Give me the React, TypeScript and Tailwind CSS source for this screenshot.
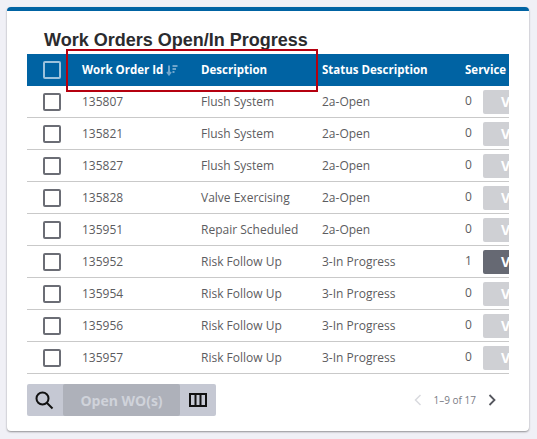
import React from 'react';

const rows = [
  { id: '135807', desc: 'Flush System', status: '2a-Open', count: 0 },
  { id: '135821', desc: 'Flush System', status: '2a-Open', count: 0 },
  { id: '135827', desc: 'Flush System', status: '2a-Open', count: 0 },
  { id: '135828', desc: 'Valve Exercising', status: '2a-Open', count: 0 },
  { id: '135951', desc: 'Repair Scheduled', status: '2a-Open', count: 0 },
  { id: '135952', desc: 'Risk Follow Up', status: '3-In Progress', count: 1 },
  { id: '135954', desc: 'Risk Follow Up', status: '3-In Progress', count: 0 },
  { id: '135956', desc: 'Risk Follow Up', status: '3-In Progress', count: 0 },
  { id: '135957', desc: 'Risk Follow Up', status: '3-In Progress', count: 0 },
];

const App: React.FC = () => {
  return (
    <div className="h-[439px] w-[537px] overflow-hidden bg-[#f0f0f6] p-[7px] font-['Open_Sans',sans-serif]">
      <div className="relative h-[424px] w-[522px] rounded-[4px] border-t-4 border-[#0063a3] bg-white px-5 shadow-[0_1px_2px_rgba(0,0,0,0.4)]">
        <h1 className="h-[43px] pl-[17px] pt-[17px] font-['Liberation_Sans',sans-serif] text-[18px] leading-[24px] font-bold text-[#2b2b2e]">
          Work Orders Open/In Progress
        </h1>

        <div className="w-[482px] overflow-hidden">
          <div className="flex h-[32px] items-center bg-[#0063a3] text-[11.5px] font-bold whitespace-nowrap text-white">
            <div className="flex w-[39px] shrink-0 justify-center pl-[11px]">
              <span className="h-[18px] w-[18px] rounded-[2px] border-2 border-[#9cc2dc]" />
            </div>
            <div className="flex w-[135px] shrink-0 items-center pl-4">
              Work Order Id
              <svg className="ml-[3px] mt-[1px]" width="12" height="11" viewBox="0 0 12 11" fill="none" stroke="#6fa5cb" strokeWidth="2">
                <path d="M3 0.5V9M1 7L3 9.5L5 7" />
                <path d="M6.5 1H11.5M6.5 4H10M6.5 7H8.5" />
              </svg>
            </div>
            <div className="w-[121px] shrink-0">Description</div>
            <div className="w-[143px] shrink-0">Status Description</div>
            <div className="w-[44px] shrink-0 overflow-hidden">Service</div>
          </div>

          {rows.map((row) => (
            <div key={row.id} className="flex h-[32px] items-center border-b border-[#c9c9c9] text-[12px] whitespace-nowrap text-[#5c5c60]">
              <div className="flex w-[39px] shrink-0 justify-center pl-[11px]">
                <span className="h-[18px] w-[18px] rounded-[2px] border-2 border-[#6b6d75]" />
              </div>
              <div className="w-[135px] shrink-0 pl-4">{row.id}</div>
              <div className="w-[121px] shrink-0">{row.desc}</div>
              <div className="w-[143px] shrink-0">{row.status}</div>
              <div className="flex w-[44px] shrink-0 items-center overflow-hidden">
                <span className="-mt-[2px] w-[18px] shrink-0">{row.count}</span>
                <span
                  className={
                    row.count > 0
                      ? 'h-[24px] w-[50px] shrink-0 rounded-[2px] bg-[#666973] pl-[18px] text-[14px] leading-[24px] font-bold text-white'
                      : 'h-[24px] w-[50px] shrink-0 rounded-[2px] bg-[#cfd0d4] pl-[18px] text-[14px] leading-[24px] font-bold text-white'
                  }
                >
                  View
                </span>
              </div>
            </div>
          ))}
        </div>

        <div className="mt-[10px] flex h-[32px] w-[482px] items-center justify-between">
          <div className="flex h-[32px] items-center rounded-[2px] bg-[#c5c8d3]">
            <div className="flex w-[36px] justify-center pr-[3px]">
              <svg width="20" height="20" viewBox="0 0 20 20" fill="none" stroke="#111" strokeWidth="2">
                <circle cx="8.5" cy="8.5" r="6" />
                <path d="M13 13L18.5 18.5" />
              </svg>
            </div>
            <div className="flex h-[32px] w-[117px] items-center justify-center rounded-[2px] bg-[#aeb1ba] text-[14px] font-bold text-[#d0d3da]">
              Open WO(s)
            </div>
            <div className="flex w-[36px] justify-center">
              <svg width="18" height="14" viewBox="0 0 18 14" fill="none" stroke="#111" strokeWidth="2">
                <rect x="1" y="1" width="16" height="12" />
                <path d="M6.5 1V13M11.5 1V13" />
              </svg>
            </div>
          </div>

          <div className="flex items-center pr-[12px] text-[10px] text-[#7a7c85]">
            <svg width="10" height="12" viewBox="0 0 10 12" fill="none" stroke="#d9dadf" strokeWidth="1.5">
              <path d="M7.5 1L2.5 6L7.5 11" />
            </svg>
            <span className="ml-[11px] mr-[11px]">1–9 of 17</span>
            <svg width="10" height="12" viewBox="0 0 10 12" fill="none" stroke="#55575e" strokeWidth="1.8">
              <path d="M2.5 1L7.5 6L2.5 11" />
            </svg>
          </div>
        </div>

        {/* red highlight drawn over the header */}
        <div className="absolute left-[59px] top-[38px] h-[43px] w-[252px] border-2 border-[#b5000f]" />
      </div>
    </div>
  );
};

export default App;
